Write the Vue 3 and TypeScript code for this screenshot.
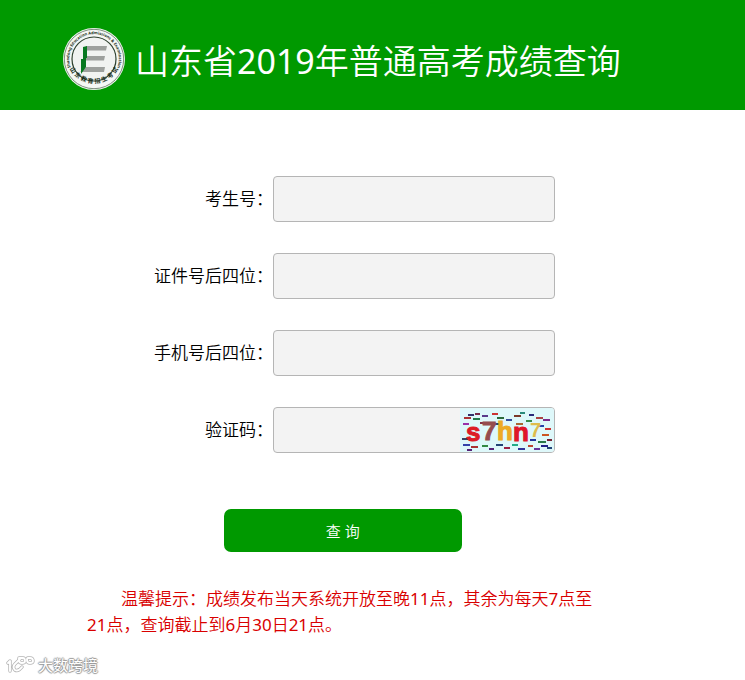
<script setup lang="ts">
import { reactive } from 'vue'

interface Field {
  key: 'candidate' | 'idTail' | 'phoneTail'
  label: string
}

interface Dash {
  x: number
  y: number
  w: number
  c: string
}

const fields: Field[] = [
  { key: 'candidate', label: '考生号：' },
  { key: 'idTail', label: '证件号后四位：' },
  { key: 'phoneTail', label: '手机号后四位：' },
]

const form = reactive({ candidate: '', idTail: '', phoneTail: '', code: '' })

// Odd entries are the runs of digits, which take a heavier weight than the Han text.
const splitDigits = (text: string): string[] => text.split(/(\d+)/)

const title = splitDigits('山东省2019年普通高考成绩查询')
const tip = splitDigits('温馨提示：成绩发布当天系统开放至晚11点，其余为每天7点至21点，查询截止到6月30日21点。')

const dashes: Dash[] = [
  { x: 8, y: 6, w: 6, c: '#33336b' }, { x: 15, y: 5, w: 5, c: '#7a2a4a' },
  { x: 4, y: 9, w: 7, c: '#a33' }, { x: 13, y: 10, w: 7, c: '#237a4a' },
  { x: 22, y: 7, w: 6, c: '#5a3a8a' }, { x: 32, y: 5, w: 6, c: '#c33' },
  { x: 37, y: 9, w: 7, c: '#2b6b3b' }, { x: 46, y: 11, w: 6, c: '#334a9a' },
  { x: 54, y: 7, w: 7, c: '#7a3a2a' }, { x: 60, y: 4, w: 5, c: '#2a8a7a' },
  { x: 69, y: 6, w: 5, c: '#2a2a7a' }, { x: 76, y: 9, w: 7, c: '#a44' },
  { x: 83, y: 11, w: 7, c: '#7a2a8a' }, { x: 66, y: 12, w: 6, c: '#3a8a4a' },
  { x: 3, y: 15, w: 6, c: '#93a' }, { x: 20, y: 14, w: 8, c: '#834' },
  { x: 34, y: 15, w: 6, c: '#247' }, { x: 56, y: 15, w: 7, c: '#a63' },
  { x: 78, y: 17, w: 6, c: '#24a' }, { x: 85, y: 20, w: 6, c: '#c33' },
  { x: 82, y: 26, w: 7, c: '#c52' }, { x: 2, y: 30, w: 6, c: '#346' },
  { x: 70, y: 31, w: 6, c: '#239' }, { x: 78, y: 33, w: 8, c: '#2a7a4a' },
  { x: 87, y: 31, w: 5, c: '#723' }, { x: 3, y: 36, w: 7, c: '#34a' },
  { x: 11, y: 38, w: 7, c: '#a33' }, { x: 22, y: 37, w: 6, c: '#384' },
  { x: 29, y: 40, w: 5, c: '#527' }, { x: 36, y: 36, w: 7, c: '#247' },
  { x: 44, y: 39, w: 6, c: '#924' }, { x: 52, y: 36, w: 6, c: '#2a8' },
  { x: 58, y: 40, w: 7, c: '#339' }, { x: 68, y: 37, w: 5, c: '#b43' },
  { x: 74, y: 40, w: 6, c: '#639' }, { x: 81, y: 37, w: 7, c: '#228' },
  { x: 87, y: 39, w: 5, c: '#247' }, { x: 7, y: 41, w: 5, c: '#527' },
]

const markPath =
  'M4 6L2 8M4 6V16M14 4L9 9Q6 12 9 15Q12 17 16 12M13 3H17Q19 3 19 6Q19 8 16 8Q13 8 13 5ZM22 3H24Q27 3 27 6Q27 8 24 8Q21 8 21 5Q21 3 22 3'
</script>

<template>
  <div class="page">
    <header class="header">
      <svg class="logo" viewBox="0 0 64 64" role="img" aria-label="山东教育招生考试">
        <defs>
          <path id="ring-top" d="M10.3 44A24.8 24.8 0 1 1 53.7 44" />
          <path id="ring-bottom" d="M6 38A27.6 27.6 0 0 0 58 38" />
        </defs>
        <circle cx="32" cy="32" r="31" fill="#f4f7f4" />
        <circle cx="32" cy="32" r="29.7" fill="none" stroke="#486048" stroke-width=".7" />
        <circle cx="32" cy="32" r="22" fill="#f1f3f1" stroke="#2d402d" stroke-width="1.2" />
        <text class="ring-latin"><textPath href="#ring-top" startOffset="50%" text-anchor="middle">Shandong Education Admissions &amp; Examination</textPath></text>
        <text class="ring-han"><textPath href="#ring-bottom" startOffset="50%" text-anchor="middle">山 东 教 育 招 生 考 试</textPath></text>
        <path d="M24 19H45L44 23.5H24ZM24 29H43L42 33.5H24ZM24 40H43L42 45H18Z" fill="#9da09d" />
        <path d="M21 20L25 19V31H24V40L19 47V32H21Z" fill="#087820" />
      </svg>
      <h1 class="title"><span v-for="(part, i) in title" :key="i" :class="{ digits: i % 2 }">{{ part }}</span></h1>
    </header>

    <main>
      <form @submit.prevent>
        <div class="fields">
          <div v-for="f in fields" :key="f.key" class="row">
            <label :for="f.key">{{ f.label }}</label>
            <div class="box">
              <input :id="f.key" v-model="form[f.key]" type="text" autocomplete="off" />
            </div>
          </div>
          <div class="row">
            <label for="code">验证码：</label>
            <div class="box">
              <input id="code" v-model="form.code" type="text" autocomplete="off" />
              <svg class="captcha" viewBox="0 0 94 44" role="img" aria-label="验证码图片">
                <rect width="94" height="44" fill="#def8fa" />
                <rect v-for="(d, i) in dashes" :key="i" :x="d.x" :y="d.y" :width="d.w" height="2" :fill="d.c" />
                <g class="glyphs">
                  <text x="6" y="33" fill="#dc1c26" stroke="#dc1c26">s</text>
                  <text x="22" y="32" fill="#964d4d" stroke="#964d4d">7</text>
                  <text x="37" y="32" fill="#edaa24" stroke="#edaa24">h</text>
                  <text x="53" y="33" fill="#df1729" stroke="#df1729">n</text>
                  <text class="faint" x="70" y="29" fill="#dfbd4c">7</text>
                </g>
              </svg>
            </div>
          </div>
        </div>
        <button class="submit" type="submit">查 询</button>
      </form>
      <p class="tip"><span v-for="(part, i) in tip" :key="i" :class="{ digits: i % 2 }">{{ part }}</span></p>
    </main>

    <footer class="mark">
      <svg class="mark-icon" viewBox="0 0 30 20" aria-hidden="true">
        <g fill="none" stroke-linecap="round" stroke-linejoin="round">
          <path :d="markPath" stroke="#b4b4b4" stroke-width="3.4" />
          <path :d="markPath" stroke="#fff" stroke-width="1.9" />
        </g>
      </svg>
      <span>大数跨境</span>
    </footer>
  </div>
</template>

<style>
body {
  background: #fff;
}
</style>

<style scoped>
.page {
  font-family: "Noto Sans", "Noto Sans CJK SC", sans-serif;
  font-size: 17px;
  font-weight: 350;
  color: #000;
}

.header {
  display: flex;
  align-items: center;
  gap: 9px;
  box-sizing: border-box;
  min-height: 110px;
  padding: 8px 62px 0;
  background: #090;
  color: #fff;
}

.logo {
  flex: none;
  width: 64px;
  height: 64px;
}

.ring-latin {
  font-size: 4px;
  font-weight: 700;
  fill: #203020;
}

.ring-han {
  font-size: 6px;
  font-weight: 700;
  fill: #203020;
}

.title {
  margin: 0;
  padding-top: 4px;
  font-size: 34px;
  font-weight: 350;
  line-height: 48px;
}

.digits {
  font-weight: 400;
}

.fields {
  display: grid;
  gap: 31px;
  padding-top: 66px;
}

.row {
  display: grid;
  grid-template-columns: 273fr 282fr 190fr;
  align-items: center;
}

label {
  text-align: right;
  line-height: 26px;
}

.box {
  display: flex;
  box-sizing: border-box;
  height: 46px;
  overflow: hidden;
  border: 1px solid #b5b5b5;
  border-radius: 4px;
  background: #f3f3f3;
}

input {
  flex: 1;
  min-width: 0;
  box-sizing: border-box;
  padding: 0 12px;
  border: 0;
  background: transparent;
  font: inherit;
}

.captcha {
  flex: none;
  width: 94px;
  height: 44px;
}

.glyphs {
  font-family: "Liberation Sans", sans-serif;
  font-size: 26px;
  font-weight: 700;
}

.faint {
  font-size: 20px;
}

.submit {
  display: block;
  width: 32%;
  height: 43px;
  margin: 56px 0 0 30%;
  padding: 0;
  border: 0;
  border-radius: 7px;
  background: #090;
  color: #fff;
  font: inherit;
  font-size: 15px;
}

.tip {
  margin: 34px 19% 0 87px;
  color: #d90000;
  line-height: 26px;
  text-indent: 2em;
}

.mark {
  display: flex;
  align-items: center;
  gap: 2px;
  padding: 17px 6px 4px;
  color: #fff;
  font-size: 15px;
  font-weight: 400;
  line-height: 20px;
  text-shadow: 1px 0 1px #999, -1px 0 1px #999, 0 1px 1px #999, 0 -1px 1px #999;
}

.mark-icon {
  width: 30px;
  height: 20px;
}
</style>
